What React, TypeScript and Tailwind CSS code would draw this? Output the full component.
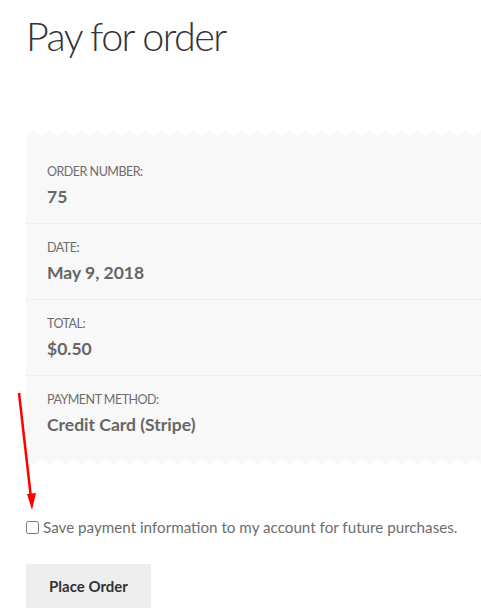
import React from "react";

const rows = [
  { label: "ORDER NUMBER:", value: "75" },
  { label: "DATE:", value: "May 9, 2018" },
  { label: "TOTAL:", value: "$0.50" },
  { label: "PAYMENT METHOD:", value: "Credit Card (Stripe)" },
];

// Saw-tooth edge drawn above / below the order summary
function Zigzag({ flip }: { flip?: boolean }) {
  const id = flip ? "zz-bottom" : "zz-top";
  return (
    <svg width="100%" height="7" className="block" preserveAspectRatio="none">
      <defs>
        <pattern id={id} x="0" y="0" width="16" height="7" patternUnits="userSpaceOnUse">
          {flip ? (
            <polygon points="0,0 16,0 16,1 8,7 0,1" fill="#f8f8f8" />
          ) : (
            <polygon points="0,6 8,0 16,6 16,7 0,7" fill="#f8f8f8" />
          )}
        </pattern>
      </defs>
      <rect width="100%" height="7" fill={`url(#${id})`} />
    </svg>
  );
}

export default function App() {
  return (
    <div className="relative min-h-[614px] w-[481px] overflow-hidden bg-white font-['Lato',sans-serif] text-[#6d6d6d]">
      <h1 className="pl-[26px] pt-[10px] text-[39.5px] font-light leading-[52px] tracking-[-1.6px] text-[#333]">
        Pay for order
      </h1>

      <div className="ml-[26px] mt-[68px]">
        <Zigzag />
        <div className="bg-[#f8f8f8] pt-[11px] pb-[7px]">
          {rows.map((row, i) => (
            <div
              key={row.label}
              className={`px-[21px] pt-[14px] pb-[13px] ${i < rows.length - 1 ? "border-b border-dotted border-[#e3e3e3]" : ""}`}
            >
              <p className="text-[12.5px] leading-[20px] tracking-[-0.5px]">{row.label}</p>
              <p className="mt-[2px] text-[17.5px] font-bold leading-[26px] text-[#666]">{row.value}</p>
            </div>
          ))}
        </div>
        <Zigzag flip />
      </div>

      <label className="ml-[26px] mt-[52px] flex items-center gap-[4px] text-[15.2px] leading-[20px]">
        <input type="checkbox" className="h-[13px] w-[13px] rounded-[2px] border border-gray-400" />
        <span>Save payment information to my account for future purchases.</span>
      </label>

      <button className="ml-[26px] mt-[27px] h-[44px] w-[125px] bg-[#eeeeee] text-[15px] font-bold text-[#333]">
        Place Order
      </button>

      {/* annotation arrow */}
      <svg className="absolute left-0 top-[390px]" width="50" height="130">
        <line x1="19" y1="3" x2="31" y2="108" stroke="#ff0000" strokeWidth="2.5" />
        <polygon points="27,104 36,103 32,120" fill="#ff0000" />
      </svg>
    </div>
  );
}
